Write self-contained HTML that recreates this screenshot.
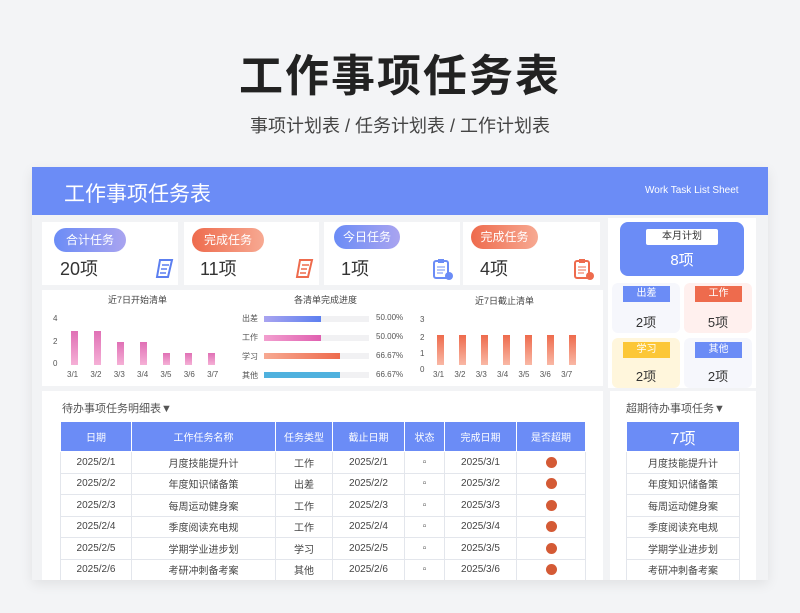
<!DOCTYPE html>
<html><head><meta charset="utf-8"><style>
*{margin:0;padding:0;box-sizing:border-box}
body{width:800px;height:613px;background:#f3f4f6;font-family:"Liberation Sans","Noto Sans CJK SC",sans-serif;position:relative;overflow:hidden;color:#444}
.a{position:absolute}
.t1{left:0;width:800px;top:40px;text-align:center;font-size:44px;font-weight:bold;color:#222;letter-spacing:2px}
.t2{left:0;width:800px;top:112px;text-align:center;font-size:18px;color:#444}
.card{left:32px;top:167px;width:736px;height:413px;background:#f2f3f5;box-shadow:0 4px 12px rgba(0,0,0,.08);overflow:hidden}
.hd{left:0;top:0;width:736px;height:48px;background:#6b8cf6}
.w{background:#fff}
.pill{height:24px;border-radius:12px;color:#fff;font-size:12px;text-align:center;line-height:24px;width:72px}
.num{font-size:18px;color:#333}
.tbl{border-collapse:collapse;font-size:10px;color:#444}
.tbl td,.tbl th{border:1px solid #e3e6ec;text-align:center;height:21.5px;padding:0}
.tbl th{background:#6b8cf6;color:#fff;font-weight:normal;height:30px;border-color:#fff}
.dot{display:inline-block;width:11px;height:11px;border-radius:50%;background:#d45a35;vertical-align:middle}
.bar{position:absolute;width:7px;background:linear-gradient(#e070b5,#f5b0d6)}
.bar2{position:absolute;width:7px;background:linear-gradient(#ee6b4d,#f9b8a5)}
.sm{font-size:8px;color:#555}
</style></head><body>
<div class="a t1">工作事项任务表</div>
<div class="a t2">事项计划表 / 任务计划表 / 工作计划表</div>
<div class="a card">
 <div class="a hd"></div>
 <div class="a" style="left:32px;top:11px;font-size:21px;color:#fff">工作事项任务表</div>
 <div class="a" style="left:613px;top:18px;font-size:10px;color:#fff">Work Task List Sheet</div>

 <!-- KPI -->
 <div class="a w" style="left:10px;top:55px;width:136px;height:63px"></div>
 <div class="a w" style="left:152px;top:55px;width:135px;height:63px"></div>
 <div class="a w" style="left:292px;top:55px;width:136px;height:63px"></div>
 <div class="a w" style="left:431px;top:55px;width:137px;height:63px"></div>
 <div class="a pill" style="left:22px;top:61px;background:linear-gradient(90deg,#6b8cf6,#a9a4f0)">合计任务</div>
 <div class="a pill" style="left:160px;top:61px;background:linear-gradient(90deg,#ee6b4d,#f7a992)">完成任务</div>
 <div class="a pill" style="left:302px;top:58px;width:66px;background:linear-gradient(90deg,#6b8cf6,#a9a4f0)">今日任务</div>
 <div class="a pill" style="left:439px;top:58px;width:67px;background:linear-gradient(90deg,#ee6b4d,#f7a992)">完成任务</div>
 <div class="a num" style="left:28px;top:88px">20项</div>
 <div class="a num" style="left:168px;top:88px">11项</div>
 <div class="a num" style="left:309px;top:88px">1项</div>
 <div class="a num" style="left:448px;top:88px">4项</div>
 <svg class="a" style="left:122px;top:90px" width="22" height="22"><path d="M6 3h12l-4 17H3z" fill="#fff" stroke="#5c7ff0" stroke-width="2"/><path d="M8 8h7M7 12h6M6 16h6" stroke="#5c7ff0" stroke-width="1.5"/></svg>
 <svg class="a" style="left:262px;top:90px" width="22" height="22"><path d="M6 3h12l-4 17H3z" fill="#fff" stroke="#ee6b4d" stroke-width="2"/><path d="M8 8h7M7 12h6M6 16h6" stroke="#ee6b4d" stroke-width="1.5"/></svg>
 <svg class="a" style="left:400px;top:90px" width="22" height="24"><rect x="2" y="4" width="14" height="17" rx="2" fill="#fff" stroke="#6b8cf6" stroke-width="2"/><rect x="6" y="2" width="6" height="4" fill="#6b8cf6"/><path d="M5 10h8M5 13h8M5 16h6" stroke="#6b8cf6"/><circle cx="17" cy="19" r="4" fill="#6b8cf6"/></svg>
 <svg class="a" style="left:541px;top:90px" width="22" height="24"><rect x="2" y="4" width="14" height="17" rx="2" fill="#fff" stroke="#ee6b4d" stroke-width="2"/><rect x="6" y="2" width="6" height="4" fill="#ee6b4d"/><path d="M5 10h8M5 13h8M5 16h6" stroke="#ee6b4d"/><circle cx="17" cy="19" r="4" fill="#ee6b4d"/></svg>

 <!-- right top -->
 <div class="a w" style="left:576px;top:51px;width:148px;height:170px"></div>
 <div class="a" style="left:588px;top:55px;width:124px;height:54px;background:#6b8cf6;border-radius:8px"></div>
 <div class="a" style="left:614px;top:62px;width:72px;height:16px;background:#fff;border-radius:2px;font-size:10px;text-align:center;line-height:16px;color:#333">本月计划</div>
 <div class="a" style="left:588px;top:82px;width:124px;text-align:center;color:#fff;font-size:15px">8项</div>
 <div class="a" style="left:580px;top:116px;width:68px;height:50px;background:#f6f7fc;border-radius:6px"></div>
 <div class="a" style="left:652px;top:116px;width:68px;height:50px;background:#fff0ee;border-radius:6px"></div>
 <div class="a" style="left:580px;top:171px;width:68px;height:50px;background:#fff6dc;border-radius:6px"></div>
 <div class="a" style="left:652px;top:171px;width:68px;height:50px;background:#f6f7fc;border-radius:6px"></div>
 <div class="a" style="left:591px;top:119px;width:47px;height:16px;background:#6b8cf6;color:#fff;font-size:10px;text-align:center;line-height:16px">出差</div>
 <div class="a" style="left:663px;top:119px;width:47px;height:16px;background:#ee6b4d;color:#fff;font-size:10px;text-align:center;line-height:16px">工作</div>
 <div class="a" style="left:591px;top:175px;width:47px;height:16px;background:#fcc737;color:#fff;font-size:10px;text-align:center;line-height:16px">学习</div>
 <div class="a" style="left:663px;top:175px;width:47px;height:16px;background:#6b8cf6;color:#fff;font-size:10px;text-align:center;line-height:16px">其他</div>
 <div class="a num" style="left:580px;top:145px;width:68px;text-align:center;font-size:13px">2项</div>
 <div class="a num" style="left:652px;top:145px;width:68px;text-align:center;font-size:13px">5项</div>
 <div class="a num" style="left:580px;top:199px;width:68px;text-align:center;font-size:13px">2项</div>
 <div class="a num" style="left:652px;top:199px;width:68px;text-align:center;font-size:13px">2项</div>

 <!-- charts -->
 <div class="a w" style="left:10px;top:123px;width:561px;height:96px"></div>
 <div class="a" style="left:76px;top:126px;font-size:9px">近7日开始清单</div>
 <div class="a" style="left:262px;top:126px;font-size:9px">各清单完成进度</div>
 <div class="a" style="left:443px;top:127px;font-size:9px">近7日截止清单</div>
 <div class="a sm" style="left:21px;top:147px">4</div><div class="a sm" style="left:21px;top:170px">2</div><div class="a sm" style="left:21px;top:192px">0</div>
 <div class="bar" style="left:39px;top:164px;height:34px"></div>
 <div class="bar" style="left:62px;top:164px;height:34px"></div>
 <div class="bar" style="left:85px;top:175px;height:23px"></div>
 <div class="bar" style="left:108px;top:175px;height:23px"></div>
 <div class="bar" style="left:131px;top:186px;height:12px"></div>
 <div class="bar" style="left:153px;top:186px;height:12px"></div>
 <div class="bar" style="left:176px;top:186px;height:12px"></div>
 <div class="a sm" style="left:35px;top:203px;word-spacing:10px">3/1 3/2 3/3 3/4 3/5 3/6 3/7</div>
 <div class="a sm" style="left:210px;top:146px">出差</div><div class="a sm" style="left:210px;top:165px">工作</div><div class="a sm" style="left:210px;top:184px">学习</div><div class="a sm" style="left:210px;top:203px">其他</div>
 <div class="a" style="left:232px;top:149px;width:105px;height:6px;background:#f1f1f3"></div>
 <div class="a" style="left:232px;top:168px;width:105px;height:6px;background:#f1f1f3"></div>
 <div class="a" style="left:232px;top:186px;width:105px;height:6px;background:#f1f1f3"></div>
 <div class="a" style="left:232px;top:205px;width:105px;height:6px;background:#f1f1f3"></div>
 <div class="a" style="left:232px;top:149px;width:57px;height:6px;background:linear-gradient(90deg,#a9a4f0,#5c7ff0)"></div>
 <div class="a" style="left:232px;top:168px;width:57px;height:6px;background:linear-gradient(90deg,#f29fcf,#e060b0)"></div>
 <div class="a" style="left:232px;top:186px;width:76px;height:6px;background:linear-gradient(90deg,#f7a992,#ee6b4d)"></div>
 <div class="a" style="left:232px;top:205px;width:76px;height:6px;background:#4fb1de"></div>
 <div class="a sm" style="left:344px;top:146px">50.00%</div><div class="a sm" style="left:344px;top:165px">50.00%</div><div class="a sm" style="left:344px;top:184px">66.67%</div><div class="a sm" style="left:344px;top:203px">66.67%</div>
 <div class="a sm" style="left:388px;top:148px">3</div><div class="a sm" style="left:388px;top:166px">2</div><div class="a sm" style="left:388px;top:182px">1</div><div class="a sm" style="left:388px;top:198px">0</div>
 <div class="bar2" style="left:405px;top:168px;height:30px"></div>
 <div class="bar2" style="left:427px;top:168px;height:30px"></div>
 <div class="bar2" style="left:449px;top:168px;height:30px"></div>
 <div class="bar2" style="left:471px;top:168px;height:30px"></div>
 <div class="bar2" style="left:493px;top:168px;height:30px"></div>
 <div class="bar2" style="left:515px;top:168px;height:30px"></div>
 <div class="bar2" style="left:537px;top:168px;height:30px"></div>
 <div class="a sm" style="left:401px;top:203px;word-spacing:8px">3/1 3/2 3/3 3/4 3/5 3/6 3/7</div>

 <!-- bottom -->
 <div class="a w" style="left:10px;top:224px;width:561px;height:200px"></div>
 <div class="a w" style="left:578px;top:224px;width:146px;height:200px"></div>
 <div class="a" style="left:30px;top:233px;font-size:11px;color:#555">待办事项任务明细表▼</div>
 <div class="a" style="left:594px;top:233px;font-size:11px;color:#555">超期待办事项任务▼</div>
 <table class="a tbl" style="left:28px;top:254px;width:526px">
  <tr><th style="width:71px">日期</th><th style="width:144px">工作任务名称</th><th style="width:57px">任务类型</th><th style="width:72px">截止日期</th><th style="width:40px">状态</th><th style="width:72px">完成日期</th><th>是否超期</th></tr>
  <tr><td>2025/2/1</td><td>月度技能提升计</td><td>工作</td><td>2025/2/1</td><td>▫</td><td>2025/3/1</td><td><span class="dot"></span></td></tr>
  <tr><td>2025/2/2</td><td>年度知识储备策</td><td>出差</td><td>2025/2/2</td><td>▫</td><td>2025/3/2</td><td><span class="dot"></span></td></tr>
  <tr><td>2025/2/3</td><td>每周运动健身案</td><td>工作</td><td>2025/2/3</td><td>▫</td><td>2025/3/3</td><td><span class="dot"></span></td></tr>
  <tr><td>2025/2/4</td><td>季度阅读充电规</td><td>工作</td><td>2025/2/4</td><td>▫</td><td>2025/3/4</td><td><span class="dot"></span></td></tr>
  <tr><td>2025/2/5</td><td>学期学业进步划</td><td>学习</td><td>2025/2/5</td><td>▫</td><td>2025/3/5</td><td><span class="dot"></span></td></tr>
  <tr><td>2025/2/6</td><td>考研冲刺备考案</td><td>其他</td><td>2025/2/6</td><td>▫</td><td>2025/3/6</td><td><span class="dot"></span></td></tr>
 </table>
 <table class="a tbl" style="left:594px;top:254px;width:114px">
  <tr><th style="font-size:16px">7项</th></tr>
  <tr><td>月度技能提升计</td></tr><tr><td>年度知识储备策</td></tr><tr><td>每周运动健身案</td></tr><tr><td>季度阅读充电规</td></tr><tr><td>学期学业进步划</td></tr><tr><td>考研冲刺备考案</td></tr>
 </table>
</div>
</body></html>
